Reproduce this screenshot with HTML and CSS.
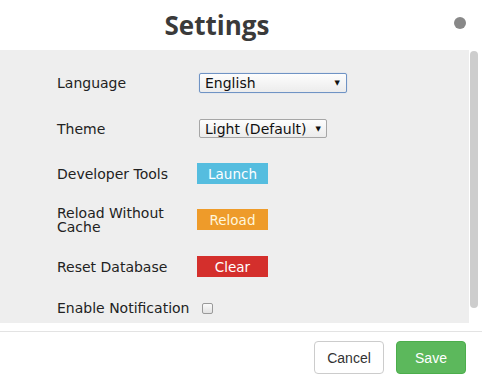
FILE: index.html
```html
<!DOCTYPE html>
<html>
<head>
<meta charset="utf-8">
<link rel="stylesheet" href="styles.css">
</head>
<body>
<div class="modal">
  <div class="header">
    <div class="title">Settings</div>
    <div class="dot"></div>
  </div>
  <div class="body">
    <div class="content">
      <div class="form">
        <div class="label">Language</div>
        <div class="ctl"><div class="select select-lang focus"><span>English</span><span class="arrow">▼</span></div></div>
        <div class="label">Theme</div>
        <div class="ctl"><div class="select select-theme"><span>Light (Default)</span><span class="arrow">▼</span></div></div>
        <div class="label">Developer Tools</div>
        <div class="ctl"><div class="btn btn-info">Launch</div></div>
        <div class="label">Reload Without Cache</div>
        <div class="ctl"><div class="btn btn-warn">Reload</div></div>
        <div class="label">Reset Database</div>
        <div class="ctl"><div class="btn btn-danger">Clear</div></div>
        <div class="label">Enable Notification</div>
        <div class="ctl"><span class="check"></span></div>
      </div>
    </div>
    <div class="scroll"><div class="thumb"></div></div>
  </div>
  <div class="footer">
    <div class="fbtn cancel">Cancel</div>
    <div class="fbtn save">Save</div>
  </div>
</div>
</body>
</html>
```
FILE: styles.css
```css
html, body {
  margin: 0;
  padding: 0;
  background: #fff;
}
body {
  width: 482px;
  height: 384px;
  overflow: hidden;
  font-family: "DejaVu Sans", Verdana, sans-serif;
  font-size: 14px;
  color: #222;
}
.header {
  height: 50px;
  display: flex;
  align-items: center;
}
.title {
  flex: 1;
  text-align: center;
  padding-right: 20px;
  font-family: "Open Sans", sans-serif;
  font-weight: 700;
  font-size: 26px;
  color: #3a3a3a;
  line-height: 1;
  margin-top: -1px;
}
.dot {
  width: 12px;
  height: 12px;
  border-radius: 50%;
  background: #888;
  margin-right: 16px;
  margin-top: -4px;
}
.body {
  display: flex;
  height: 273px;
}
.content {
  flex: 1;
  background: #eee;
  overflow: hidden;
}
.scroll {
  width: 13px;
  background: #fff;
}
.thumb {
  width: 8px;
  height: 257px;
  margin: 1px 0 0 1px;
  background: #cdcdcd;
  border-radius: 4px;
}
.form {
  display: grid;
  grid-template-columns: 140px 1fr;
  grid-template-rows: 46px 45px 45px 47px 47px 36px;
  align-items: center;
  padding: 10px 0 0 57px;
}
.label {
  line-height: 14px;
}
.ctl {
  display: flex;
  align-items: center;
}
.select {
  box-sizing: border-box;
  display: flex;
  align-items: center;
  justify-content: space-between;
  margin-left: 2px;
  border: 1px solid #a6a6a6;
  border-radius: 2px;
  background: linear-gradient(#fdfdfd, #ececec);
  color: #111;
  padding: 0 6px 0 5px;
}
.select-lang {
  width: 148px;
  height: 20px;
  border-color: #6f93c4;
  box-shadow: 0 0 1px #9bbbe6;
}
.select-theme {
  width: 128px;
  height: 19px;
  padding-right: 5px;
}
.arrow {
  font-size: 7px;
  color: #111;
}
.btn {
  box-sizing: border-box;
  width: 71px;
  height: 21px;
  display: flex;
  align-items: center;
  justify-content: center;
  color: #fff;
  font-size: 13.5px;
}
.btn-info {
  background: #55bddf;
}
.btn-warn {
  background: #ee9b2a;
  color: #fff6dc;
}
.btn-danger {
  background: #d42f2c;
}
.check {
  box-sizing: border-box;
  width: 11px;
  height: 11px;
  margin-left: 5px;
  border: 1px solid #9a9a9a;
  border-radius: 2px;
  background: linear-gradient(#fafafa, #e2e2e2);
}
.footer {
  margin-top: 8px;
  border-top: 1px solid #e3e3e3;
  display: flex;
  justify-content: flex-end;
  gap: 12px;
  padding: 9px 16px 0 0;
}
.fbtn {
  box-sizing: border-box;
  width: 70px;
  height: 33px;
  border-radius: 4px;
  display: flex;
  align-items: center;
  justify-content: center;
  font-family: "Liberation Sans", Arial, sans-serif;
  font-size: 14px;
}
.cancel {
  border: 1px solid #ccc;
  color: #333;
  background: #fff;
}
.save {
  background: #5cb85c;
  border: 1px solid #4cae4c;
  color: #fff;
}
```
